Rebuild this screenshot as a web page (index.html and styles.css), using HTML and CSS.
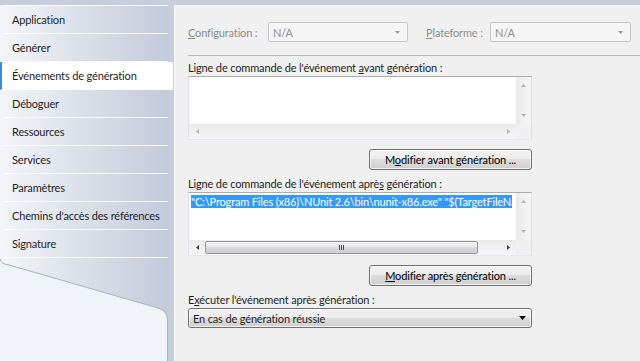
FILE: index.html
```html
<!DOCTYPE html>
<html lang="fr">
<head>
    <meta charset="UTF-8">
    <meta name="viewport" content="width=device-width, initial-scale=1.0">
    <link rel="stylesheet" href="styles.css">
    <title>Événements de génération</title>
</head>
<body>
    <div class="window">
        <!-- onglets de gauche -->
        <nav class="sidebar">
            <ul class="nav-list">
                <li class="nav-item">Application</li>
                <li class="nav-item">Générer</li>
                <li class="nav-item active">Événements de génération</li>
                <li class="nav-item">Déboguer</li>
                <li class="nav-item">Ressources</li>
                <li class="nav-item">Services</li>
                <li class="nav-item">Paramètres</li>
                <li class="nav-item">Chemins d'accès des références</li>
                <li class="nav-item">Signature</li>
            </ul>
            <div class="sidebar-foot">
                <svg class="foot-shape" width="168" height="103" viewBox="0 0 168 103">
                    <path d="M0 1 Q0 6 9 7 L158 50 Q167.5 53 167.5 62 V103 H0 Z" fill="#f0f3f8"/>
                    <path d="M0.5 1 Q0.5 6 9 7 L158 50 Q167.5 53 167.5 62 V103" fill="none" stroke="#a9b1c3"/>
                </svg>
            </div>
        </nav>

        <main class="panel">
            <div class="config-row">
                <span class="config-label label-config"><u>C</u>onfiguration :</span>
                <div class="combo combo-config">
                    <span>N/A</span>
                    <svg class="arrow" width="5" height="3" viewBox="0 0 5 3"><polygon points="0,0 5,0 2.5,3" fill="#9c9c9c"/></svg>
                </div>
                <span class="config-label label-platform"><u>P</u>lateforme :</span>
                <div class="combo combo-platform">
                    <span>N/A</span>
                    <svg class="arrow" width="5" height="3" viewBox="0 0 5 3"><polygon points="0,0 5,0 2.5,3" fill="#9c9c9c"/></svg>
                </div>
            </div>
            <hr class="sep">

            <!-- avant génération -->
            <div class="field-label">Ligne de commande de l'événement <u>a</u>vant génération :</div>
            <div class="edit">
                <div class="edit-text"></div>
                <div class="vscroll">
                    <div class="scroll-btn"><svg width="5" height="3" viewBox="0 0 5 3"><polygon points="0,3 2.5,0 5,3" fill="#b4b4b4"/></svg></div>
                    <div class="scroll-btn"><svg width="5" height="3" viewBox="0 0 5 3"><polygon points="0,0 5,0 2.5,3" fill="#b4b4b4"/></svg></div>
                </div>
                <div class="hscroll">
                    <div class="scroll-btn"><svg width="3" height="5" viewBox="0 0 3 5"><polygon points="3,0 3,5 0,2.5" fill="#b4b4b4"/></svg></div>
                    <div class="scroll-btn"><svg width="3" height="5" viewBox="0 0 3 5"><polygon points="0,0 3,2.5 0,5" fill="#b4b4b4"/></svg></div>
                </div>
                <div class="corner"></div>
            </div>
            <div class="btn-row">
                <button class="btn" type="button">M<u>o</u>difier avant génération ...</button>
            </div>

            <!-- après génération -->
            <div class="field-label">Ligne de commande de l'événement aprè<u>s</u> génération :</div>
            <div class="edit">
                <div class="edit-text">
                    <div class="edit-line"><span class="selected">"C:\Program Files (x86)\NUnit 2.6\bin\nunit-x86.exe" "$(TargetFileName)" /run</span></div>
                </div>
                <div class="vscroll">
                    <div class="scroll-btn"><svg width="5" height="3" viewBox="0 0 5 3"><polygon points="0,3 2.5,0 5,3" fill="#b4b4b4"/></svg></div>
                    <div class="scroll-btn"><svg width="5" height="3" viewBox="0 0 5 3"><polygon points="0,0 5,0 2.5,3" fill="#b4b4b4"/></svg></div>
                </div>
                <div class="hscroll">
                    <div class="scroll-btn"><svg width="3" height="5" viewBox="0 0 3 5"><polygon points="3,0 3,5 0,2.5" fill="#3c3c3c"/></svg></div>
                    <div class="thumb">
                        <svg width="5" height="5" viewBox="0 0 5 5"><path d="M0.5 0V5M2.5 0V5M4.5 0V5" stroke="#4a4a4a"/></svg>
                    </div>
                    <div class="track-rest"></div>
                    <div class="scroll-btn"><svg width="3" height="5" viewBox="0 0 3 5"><polygon points="0,0 3,2.5 0,5" fill="#3c3c3c"/></svg></div>
                </div>
                <div class="corner"></div>
            </div>
            <div class="btn-row">
                <button class="btn" type="button"><u>M</u>odifier après génération ...</button>
            </div>

            <div class="field-label">E<u>x</u>écuter l'événement après génération :</div>
            <div class="select">
                <span>En cas de génération réussie</span>
                <svg width="7" height="4" viewBox="0 0 7 4"><polygon points="0,0 7,0 3.5,4" fill="#000"/></svg>
            </div>
        </main>
    </div>
</body>
</html>
```

FILE: styles.css
```css
* {
  box-sizing: border-box;
}

body {
  margin: 0;
  background-color: #c6cddc;
  font-family: "Segoe UI", Lato, "Noto Sans", sans-serif;
  font-size: 11px;
  letter-spacing: -0.15px;
  color: #1e1e1e;
}

.window {
  display: flex;
  height: 361px;
  padding-top: 5px;
  overflow: hidden;
}

/* sidebar */
.sidebar {
  width: 168px;
  flex: none;
  display: flex;
  flex-direction: column;
  background: linear-gradient(to right, #f3f5f9, #dde1ea 45%, #c3cada);
}

.nav-list {
  list-style: none;
  margin: 0 0 0 4px;
  padding: 0;
  border-top: 1px solid rgba(255, 255, 255, 0.9);
}

.nav-item {
  height: 28px;
  line-height: 27px;
  padding-left: 8px;
  border-bottom: 1px solid rgba(255, 255, 255, 0.9);
  white-space: nowrap;
}

.nav-item.active {
  margin-left: -4px;
  margin-right: -5px;
  padding-left: 10px;
  border-left: 2px solid #3c8ae0;
  background-color: #fff;
}

.sidebar-foot {
  flex: 1;
}

.foot-shape {
  display: block;
}

/* main panel */
.panel {
  flex: 1;
  margin-left: 6px;
  padding: 16px 0 0 13px;
  background-color: #f0f0f0;
  border-top: 1px solid #fbfbfb;
  border-left: 1px solid #fbfbfb;
}

.config-row {
  display: flex;
  align-items: center;
  height: 20px;
}

.config-label {
  color: #8e8e8e;
  white-space: nowrap;
}

.label-config {
  width: 80px;
}

.label-platform {
  width: 64px;
  margin-left: 18px;
}

.combo {
  height: 20px;
  display: flex;
  align-items: center;
  justify-content: space-between;
  padding: 0 7px 0 4px;
  border: 1px solid #c6c6c6;
  border-radius: 2px;
  background-color: #f5f5f5;
  color: #8e8e8e;
}

.combo-config {
  width: 140px;
}

.combo-platform {
  width: 141px;
}

.sep {
  margin: 13px 0 0;
  height: 0;
  border: 0;
  border-top: 1px solid #b9b9b9;
}

.field-label {
  width: 344px;
  margin-top: 4px;
  line-height: 16px;
  white-space: nowrap;
}

.edit {
  width: 344px;
  height: 64px;
  display: grid;
  grid-template-columns: 1fr 15px;
  grid-template-rows: 1fr 15px;
  border: 1px solid;
  border-color: #abadb3 #dbdfe6 #e3e9ef #e2e3ea;
  background-color: #fff;
}

.edit-text {
  padding: 2px 0 0 2px;
  min-width: 0;
}

.edit-line {
  margin-right: 4px;
  overflow: hidden;
  white-space: nowrap;
  line-height: 14px;
}

.selected {
  background-color: #3399ff;
  color: #fff;
}

.vscroll {
  display: flex;
  flex-direction: column;
  justify-content: space-between;
  background: linear-gradient(to right, #eaeaea, #f6f6f6);
}

.vscroll .scroll-btn {
  width: 15px;
  height: 17px;
}

.hscroll {
  display: flex;
  align-items: center;
  justify-content: space-between;
  background: linear-gradient(#eaeaea, #f6f6f6);
}

.hscroll .scroll-btn {
  width: 16px;
  height: 15px;
}

.scroll-btn {
  display: flex;
  align-items: center;
  justify-content: center;
}

.scroll-btn svg {
  display: block;
}

.thumb {
  width: 273px;
  height: 13px;
  display: flex;
  align-items: center;
  justify-content: center;
  border: 1px solid #979797;
  border-radius: 2px;
  background: linear-gradient(#f3f3f3, #e6e6e6 50%, #d8d8d8 50%, #d0d0d0);
}

.track-rest {
  flex: 1;
}

.corner {
  background-color: #f0f0f0;
}

.btn-row {
  width: 344px;
  display: flex;
  justify-content: flex-end;
}

.edit + .btn-row {
  margin-top: 9px;
}

.btn-row + .field-label {
  margin-top: 6px;
}

.btn {
  width: 163px;
  height: 21px;
  padding: 0;
  font-family: inherit;
  font-size: 11px;
  letter-spacing: inherit;
  color: #000;
  border: 1px solid #707070;
  border-radius: 3px;
  background: linear-gradient(#f2f2f2, #ebebeb 50%, #dddddd 50%, #cfcfcf);
  box-shadow: inset 0 0 0 1px rgba(255, 255, 255, 0.7);
}

.select {
  width: 344px;
  height: 20px;
  display: flex;
  align-items: center;
  justify-content: space-between;
  padding: 0 5px 0 4px;
  border: 1px solid #707070;
  border-radius: 3px;
  background: linear-gradient(#f2f2f2, #ebebeb 50%, #dddddd 50%, #cfcfcf);
  box-shadow: inset 0 0 0 1px rgba(255, 255, 255, 0.7);
}
```
